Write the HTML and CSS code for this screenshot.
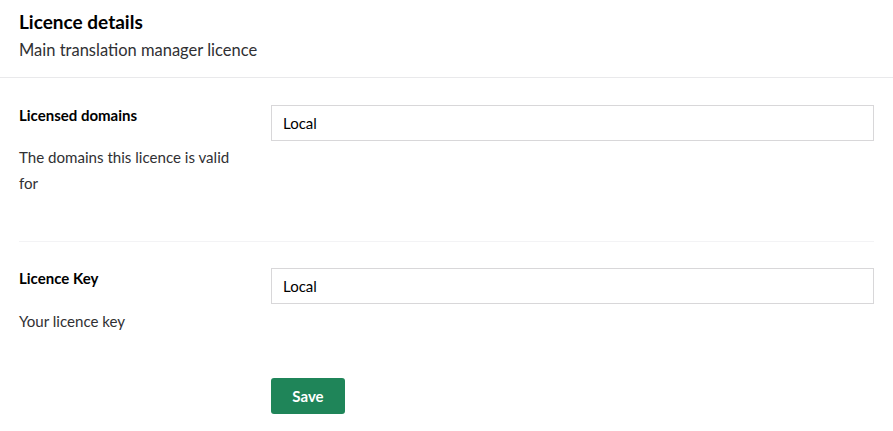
FILE: index.html
```html
<!DOCTYPE html>
<html>
<head>
<meta charset="utf-8">
<link rel="stylesheet" href="styles.css">
</head>
<body>
<div class="panel">
  <div class="header">
    <div class="title">Licence details</div>
    <div class="subtitle">Main translation manager licence</div>
  </div>
  <div class="content">
    <div class="row">
      <div class="label-col">
        <div class="label">Licensed domains</div>
        <div class="desc">The domains this licence is valid for</div>
      </div>
      <div class="field-col">
        <input class="input" type="text" value="Local">
      </div>
    </div>
    <div class="row last">
      <div class="label-col">
        <div class="label">Licence Key</div>
        <div class="desc">Your licence key</div>
      </div>
      <div class="field-col">
        <input class="input" type="text" value="Local">
      </div>
    </div>
    <div class="actions">
      <button class="btn">Save</button>
    </div>
  </div>
</div>
</body>
</html>
```

FILE: styles.css
```css
* { box-sizing: border-box; }
html, body { margin: 0; padding: 0; background: #fff; }
body {
  font-family: Lato, "Open Sans", sans-serif;
  color: #1b264f;
}
.header {
  padding: 10px 19px 15px;
  border-bottom: 1px solid #e9e9eb;
}
.title {
  font-size: 19px;
  font-weight: 700;
  line-height: 24px;
  color: #000;
}
.subtitle {
  margin-top: 4px;
  font-size: 16.5px;
  line-height: 24px;
  color: #303033;
}
.content {
  padding: 0 19px;
}
.row {
  display: grid;
  grid-template-columns: 220px 1fr;
  column-gap: 32px;
  padding: 27px 0 45px;
  border-bottom: 1px solid #f3f3f5;
}
.row.last {
  border-bottom: none;
  padding-top: 26px;
  padding-bottom: 44px;
}
.label {
  font-size: 15px;
  font-weight: 700;
  line-height: 20px;
  color: #000;
}
.desc {
  margin-top: 19px;
  font-size: 15.1px;
  line-height: 26px;
  color: #303033;
}
.row.last .desc {
  margin-top: 20px;
}
.input {
  display: block;
  width: 100%;
  height: 36px;
  border: 1px solid #d8d7d9;
  padding: 0 11px 1px;
  font-family: Lato, sans-serif;
  font-size: 15px;
  color: #000;
  background: #fff;
  outline: none;
  border-radius: 0;
}
.actions {
  padding-left: 252px;
}
.btn {
  width: 74px;
  height: 36px;
  border: none;
  border-radius: 3px;
  background: #1f8559;
  color: #fff;
  font-family: Lato, sans-serif;
  font-size: 15px;
  font-weight: 700;
  padding: 0 0 1px;
}
```
